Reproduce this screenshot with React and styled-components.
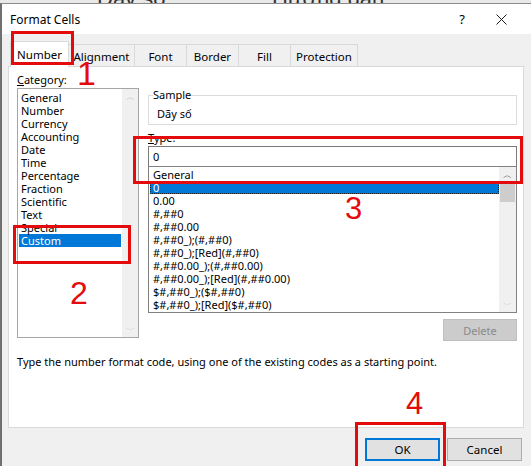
import React from 'react'
import styled, { createGlobalStyle } from 'styled-components'

const categories = [
  'General',
  'Number',
  'Currency',
  'Accounting',
  'Date',
  'Time',
  'Percentage',
  'Fraction',
  'Scientific',
  'Text',
  'Special',
  'Custom',
]

const formats = [
  'General',
  '0',
  '0.00',
  '#,##0',
  '#,##0.00',
  '#,##0_);(#,##0)',
  '#,##0_);[Red](#,##0)',
  '#,##0.00_);(#,##0.00)',
  '#,##0.00_);[Red](#,##0.00)',
  '$#,##0_);($#,##0)',
  '$#,##0_);[Red]($#,##0)',
]

const tabs = [
  { label: 'Number', width: 59 },
  { label: 'Alignment', width: 67 },
  { label: 'Font', width: 53 },
  { label: 'Border', width: 53 },
  { label: 'Fill', width: 53 },
  { label: 'Protection', width: 68 },
]

export default function App() {
  return (
    <Screen>
      <GlobalStyle />
      <ExcelStrip>
        <CutText left={97}>Dãy số</CutText>
        <CutText left={272}>Hướng dẫn</CutText>
      </ExcelStrip>

      <Dialog>
        <TitleBar>
          <Title>Format Cells</Title>
          <HelpGlyph>?</HelpGlyph>
          <CloseButton>
            <svg width="11" height="11" viewBox="0 0 11 11">
              <path d="M0.5 0.5 L10.5 10.5 M10.5 0.5 L0.5 10.5" stroke="#1a1a1a" strokeWidth="1" />
            </svg>
          </CloseButton>
        </TitleBar>

        <Body>
          <TabStrip>
            {tabs.map((tab, i) => (
              <Tab key={tab.label} active={i === 0} style={{ width: tab.width }}>
                {tab.label}
              </Tab>
            ))}
          </TabStrip>

          <Panel>
            <ContentRow>
              <LeftColumn>
                <FieldLabel>
                  <u>C</u>ategory:
                </FieldLabel>
                <CategoryBox>
                  <CategoryItems>
                    {categories.map((c) => (
                      <ListRow key={c} selected={c === 'Custom'}>
                        {c}
                      </ListRow>
                    ))}
                  </CategoryItems>
                  <ScrollBar>
                    <Arrow>︿</Arrow>
                    <Track />
                    <Arrow>﹀</Arrow>
                  </ScrollBar>
                </CategoryBox>
              </LeftColumn>

              <RightColumn>
                <SampleGroup>
                  <legend>Sample</legend>
                  <SampleText>Dãy số</SampleText>
                </SampleGroup>
                <TypeLabel>
                  <u>T</u>ype:
                </TypeLabel>
                <TypeInput defaultValue="0" readOnly />
                <FormatBox>
                  <FormatItems>
                    {formats.map((f) => (
                      <ListRow key={f} selected={f === '0'} focused={f === '0'} indent={3}>
                        {f}
                      </ListRow>
                    ))}
                  </FormatItems>
                  <ScrollBar wide>
                    <Arrow active>︿</Arrow>
                    <Thumb />
                    <Track />
                    <Arrow>﹀</Arrow>
                  </ScrollBar>
                </FormatBox>
                <DeleteButton disabled>Delete</DeleteButton>
              </RightColumn>
            </ContentRow>
            <Hint>Type the number format code, using one of the existing codes as a starting point.</Hint>
          </Panel>

          <Footer>
            <DialogButton primary>OK</DialogButton>
            <DialogButton>Cancel</DialogButton>
          </Footer>
        </Body>
      </Dialog>

      <Marker left={11} top={31} width={63} height={34} />
      <MarkerNumber left={77} top={56} size={34}>1</MarkerNumber>
      <Marker left={13} top={225} width={118} height={39} />
      <MarkerNumber left={70} top={277} size={32}>2</MarkerNumber>
      <Marker left={133} top={136} width={390} height={48} />
      <MarkerNumber left={345} top={193} size={31}>3</MarkerNumber>
      <Marker left={355} top={422} width={91} height={50} />
      <MarkerNumber left={406} top={388} size={31}>4</MarkerNumber>
    </Screen>
  )
}

const GlobalStyle = createGlobalStyle`
  html, body {
    margin: 0;
    padding: 0;
    background: #f0f0f0;
  }
  body {
    font-family: "Noto Sans", "Open Sans", sans-serif;
    font-size: 11px;
    color: #000;
  }
`

const Screen = styled.div`
  position: relative;
  width: 531px;
  height: 466px;
  overflow: hidden;
  display: flex;
  flex-direction: column;
  background: #f0f0f0;
`

const ExcelStrip = styled.div`
  position: relative;
  height: 3px;
  background: #e9e9e9;
  overflow: hidden;
`

const CutText = styled.span`
  position: absolute;
  left: ${(p) => p.left}px;
  bottom: -7px;
  font-family: "Liberation Sans", sans-serif;
  font-size: 22px;
  line-height: 22px;
  color: #333;
`

const Dialog = styled.div`
  flex: 1;
  display: flex;
  flex-direction: column;
  border-left: 2px solid #707070;
  border-top: 1px solid #8c8c8c;
  background: #f0f0f0;
`

const TitleBar = styled.div`
  height: 30px;
  display: flex;
  align-items: center;
  background: #fff;
  padding-left: 8px;
`

const Title = styled.div`
  flex: 1;
  font-size: 12px;
`

const HelpGlyph = styled.div`
  width: 14px;
  margin-right: 27px;
  font-size: 13px;
  text-align: center;
`

const CloseButton = styled.div`
  width: 11px;
  height: 11px;
  margin-right: 24px;
  display: flex;
`

const Body = styled.div`
  flex: 1;
  display: flex;
  flex-direction: column;
  padding: 7px 9px 0 6px;
`

const TabStrip = styled.div`
  display: flex;
  align-items: flex-end;
  height: 26px;
  padding-left: 2px;
  margin-bottom: -1px;
  position: relative;
  z-index: 1;
`

const Tab = styled.div`
  box-sizing: border-box;
  height: ${(p) => (p.active ? 26 : 23)}px;
  margin-left: ${(p) => (p.active ? 0 : -1)}px;
  display: flex;
  align-items: center;
  justify-content: center;
  background: ${(p) => (p.active ? '#fff' : '#f0f0f0')};
  border: 1px solid #d9d9d9;
  border-bottom: ${(p) => (p.active ? 'none' : '1px solid #d9d9d9')};
  font-size: 11.5px;
  padding-top: ${(p) => (p.active ? 0 : 1)}px;
  z-index: ${(p) => (p.active ? 2 : 1)};
`

const Panel = styled.div`
  box-sizing: border-box;
  width: 516px;
  height: 362px;
  background: #fff;
  border: 1px solid #d9d9d9;
  padding: 5px 6px 0 8px;
  display: flex;
  flex-direction: column;
`

const ContentRow = styled.div`
  display: flex;
  gap: 9px;
`

const LeftColumn = styled.div`
  width: 122px;
  display: flex;
  flex-direction: column;
`

const FieldLabel = styled.div`
  height: 16px;
  line-height: 16px;
`

const CategoryBox = styled.div`
  box-sizing: border-box;
  height: 250px;
  border: 1px solid #a6a6a6;
  display: flex;
`

const CategoryItems = styled.div`
  flex: 1;
  padding: 2px 1px 1px 1px;
`

const ListRow = styled.div`
  box-sizing: border-box;
  height: 13px;
  line-height: 13px;
  padding-left: ${(p) => p.indent || 2}px;
  white-space: nowrap;
  background: ${(p) => (p.selected ? '#0078d7' : 'transparent')};
  color: ${(p) => (p.selected ? '#fff' : '#000')};
  outline: ${(p) => (p.focused ? '1px dotted #222' : 'none')};
  outline-offset: -1px;
`

const ScrollBar = styled.div`
  width: ${(p) => (p.wide ? 17 : 16)}px;
  display: flex;
  flex-direction: column;
  background: #f0f0f0;
`

const Arrow = styled.div`
  height: 15px;
  display: flex;
  align-items: center;
  justify-content: center;
  font-size: 9px;
  color: ${(p) => (p.active ? '#606060' : '#c2c2c2')};
`

const Thumb = styled.div`
  height: 20px;
  margin: 0 1px;
  background: #cdcdcd;
`

const Track = styled.div`
  flex: 1;
`

const RightColumn = styled.div`
  flex: 1;
  display: flex;
  flex-direction: column;
`

const SampleGroup = styled.fieldset`
  margin: 15px 0 0 0;
  padding: 3px 8px 2px 8px;
  border: 1px solid #dcdcdc;

  legend {
    padding: 0;
    margin-left: -4px;
    line-height: 16px;
  }
`

const SampleText = styled.div`
  line-height: 16px;
`

const TypeLabel = styled.div`
  margin-top: 6px;
  height: 15px;
  line-height: 13px;
`

const TypeInput = styled.input`
  box-sizing: border-box;
  height: 21px;
  width: 100%;
  margin: 0;
  border: 1px solid #7a7a7a;
  padding: 0 4px;
  font: inherit;
  outline: none;
`

const FormatBox = styled.div`
  box-sizing: border-box;
  height: 147px;
  margin-top: -1px;
  border: 1px solid #828282;
  display: flex;
`

const FormatItems = styled.div`
  flex: 1;
  padding: 1px 0 0 1px;
`

const DeleteButton = styled.button`
  align-self: flex-end;
  margin-top: 6px;
  width: 74px;
  height: 22px;
  background: #cccccc;
  border: 1px solid #bfbfbf;
  color: #8a8a8a;
  font: inherit;
  padding: 0;
`

const Hint = styled.div`
  margin-top: 14px;
  line-height: 14px;
`

const Footer = styled.div`
  display: flex;
  justify-content: flex-end;
  gap: 7px;
  margin-top: 10px;
`

const DialogButton = styled.button`
  box-sizing: border-box;
  width: 75px;
  height: 23px;
  padding: 0;
  background: #e1e1e1;
  border: ${(p) => (p.primary ? '2px solid #0078d7' : '1px solid #adadad')};
  font: inherit;
  font-size: 11.5px;
  color: #000;
`

const Marker = styled.div`
  position: absolute;
  z-index: 10;
  left: ${(p) => p.left}px;
  top: ${(p) => p.top}px;
  width: ${(p) => p.width}px;
  height: ${(p) => p.height}px;
  box-sizing: border-box;
  border: 3px solid #e30b0b;
  pointer-events: none;
`

const MarkerNumber = styled.div`
  position: absolute;
  z-index: 10;
  left: ${(p) => p.left}px;
  top: ${(p) => p.top}px;
  font-family: "Liberation Sans", Arial, sans-serif;
  font-size: ${(p) => p.size}px;
  line-height: 1;
  color: #e30b0b;
`
